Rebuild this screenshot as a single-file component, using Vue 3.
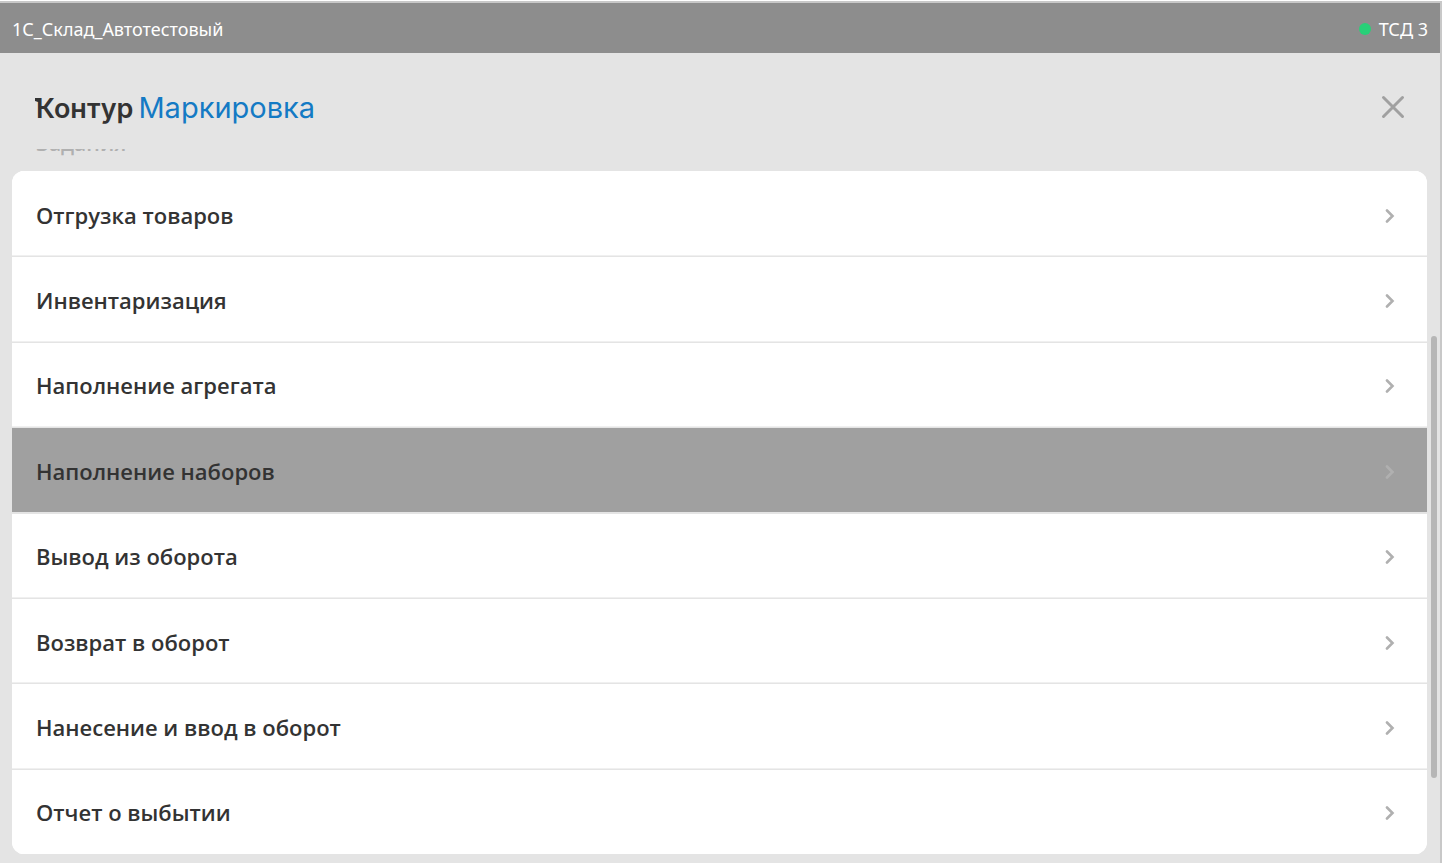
<script setup>
import { ref } from 'vue'

const tasks = [
  'Отгрузка товаров',
  'Инвентаризация',
  'Наполнение агрегата',
  'Наполнение наборов',
  'Вывод из оборота',
  'Возврат в оборот',
  'Нанесение и ввод в оборот',
  'Отчет о выбытии',
]
const active = ref(3)
</script>

<template>
  <div class="app">
    <header class="status">
      <span>1С_Склад_Автотестовый</span>
      <span class="device"><i class="dot"></i>ТСД 3</span>
    </header>
    <div class="top">
      <h1 class="logo">
        <svg class="serif" width="5" height="4" viewBox="0 0 5 4" aria-hidden="true"><path d="M0 0H5V4H3L0 3Z" fill="#333" /></svg>
        <span class="brand">Контур</span><span class="product">Маркировка</span>
      </h1>
      <button class="close" type="button" aria-label="Закрыть">
        <svg width="24" height="24" viewBox="0 0 24 24"><path d="M2.5 2.5L21.5 21.5M21.5 2.5L2.5 21.5" fill="none" stroke="#a0a0a0" stroke-width="3" stroke-linecap="round" /></svg>
      </button>
    </div>
    <main class="viewport">
      <h2 class="section">Задания</h2>
      <nav class="list" aria-label="Задания">
        <button
          v-for="(task, i) in tasks"
          :key="task"
          type="button"
          class="row"
          :class="{ active: i === active }"
          @click="active = i"
        >
          <span>{{ task }}</span>
          <svg width="10" height="14" viewBox="0 0 10 14" aria-hidden="true"><path d="M2 1.5L7.5 7L2 12.5" fill="none" stroke="#b0b0b0" stroke-width="2.6" stroke-linecap="round" stroke-linejoin="miter" /></svg>
        </button>
      </nav>
    </main>
    <div class="thumb"></div>
  </div>
</template>

<style>
body {
  background: #fff;
}
</style>

<style scoped>
.app {
  position: relative;
  box-sizing: border-box;
  display: flex;
  flex-direction: column;
  min-height: 100vh;
  border-top: 1px solid #fff;
  background: #e4e4e4;
  box-shadow: inset 0 2px #c8c8c8, inset -2px 0 #c8c8c8;
  padding: 2px 2px 0 0;
  font-family: "Open Sans", "Noto Sans", sans-serif;
  color: #333;
}
.status {
  display: flex;
  justify-content: space-between;
  align-items: center;
  height: 50px;
  padding: 2px 12px 0;
  box-sizing: border-box;
  background: #8d8d8d;
  color: #fff;
  font-family: "Noto Sans", sans-serif;
  font-size: 18px;
  line-height: 24px;
}
.device {
  display: flex;
  align-items: center;
  gap: 8px;
}
.dot {
  width: 12px;
  height: 12px;
  border-radius: 50%;
  background: #28d078;
}
.top {
  display: flex;
  justify-content: space-between;
  align-items: center;
  height: 96px;
  padding: 12px 35px 0 36px;
  box-sizing: border-box;
}
.logo {
  position: relative;
  display: flex;
  align-items: baseline;
  gap: 5px;
  margin: 0;
  padding-top: 2px;
  font-family: Inter, sans-serif;
  font-size: 29px;
  line-height: 36px;
  font-weight: 400;
}
.serif {
  position: absolute;
  left: -1px;
  top: 10px;
}
.brand {
  font-size: 27px;
  font-weight: 600;
}
.product {
  color: #147ac4;
}
.close {
  display: flex;
  padding: 0;
  border: 0;
  background: none;
}
.viewport {
  flex: 1;
  display: flex;
  flex-direction: column;
  overflow: hidden;
  padding: 0 13px 9px 12px;
}
.section {
  margin: -22px 0 12px 24px;
  font-size: 21px;
  line-height: 32px;
  font-weight: 600;
  color: #b0b0b0;
}
.list {
  flex: 1;
  display: grid;
  grid-auto-rows: 1fr;
  border-radius: 12px;
  overflow: hidden;
  background: #fff;
}
.row {
  display: flex;
  justify-content: space-between;
  align-items: center;
  min-height: 72px;
  padding: 4px 32px 0 24px;
  border: 0;
  border-top: 1px solid #e4e4e4;
  border-bottom: 1px solid #f0f0f0;
  background: #fff;
  color: #333;
  font-family: inherit;
  font-size: 22px;
  line-height: 32px;
  font-weight: 600;
  text-align: left;
}
.row span {
  padding-bottom: 2px;
}
.row:first-child {
  border-top-color: #fff;
}
.row:last-child {
  border-bottom-color: #fff;
}
.row.active {
  border-bottom-color: #e4e4e4;
  background: #a0a0a0;
}
.thumb {
  position: absolute;
  right: 5px;
  top: 335px;
  bottom: 85px;
  width: 6px;
  border-radius: 3px;
  background: #b6b6b6;
}
</style>
